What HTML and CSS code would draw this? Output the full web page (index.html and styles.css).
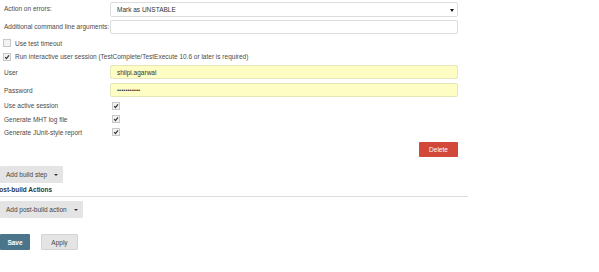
FILE: index.html
```html
<!DOCTYPE html>
<html lang="en">
<head>
  <meta charset="UTF-8">
  <title>Build configuration</title>
  <link rel="stylesheet" href="styles.css">
</head>
<body>
  <div class="form">
    <div class="row r1">
      <label class="lbl">Action on errors:</label>
      <div class="select">Mark as UNSTABLE<span class="arrow"></span></div>
    </div>
    <div class="row r2">
      <label class="lbl">Additional command line arguments:</label>
      <div class="field"></div>
    </div>
    <div class="row r3">
      <span class="box"></span>
      <span class="cblabel">Use test timeout</span>
    </div>
    <div class="row r4">
      <span class="box checked"><svg viewBox="0 0 8 8"><path d="M1.5 4.2 L3.3 6 L6.6 1.8" /></svg></span>
      <span class="cblabel">Run interactive user session (TestComplete/TestExecute 10.6 or later is required)</span>
    </div>
    <div class="row r5">
      <label class="lbl">User</label>
      <div class="field yellow">shilpi.agarwal</div>
    </div>
    <div class="row r6">
      <label class="lbl">Password</label>
      <div class="field yellow dots">•••••••••••</div>
    </div>
    <div class="row r7">
      <label class="lbl">Use active session</label>
      <span class="box checked inset"><svg viewBox="0 0 8 8"><path d="M1.5 4.2 L3.3 6 L6.6 1.8" /></svg></span>
    </div>
    <div class="row r8">
      <label class="lbl">Generate MHT log file</label>
      <span class="box checked inset"><svg viewBox="0 0 8 8"><path d="M1.5 4.2 L3.3 6 L6.6 1.8" /></svg></span>
    </div>
    <div class="row r9">
      <label class="lbl">Generate JUnit-style report</label>
      <span class="box checked inset"><svg viewBox="0 0 8 8"><path d="M1.5 4.2 L3.3 6 L6.6 1.8" /></svg></span>
    </div>
    <div class="delete-row">
      <button class="btn-delete">Delete</button>
    </div>
  </div>

  <button class="btn-gray step">Add build step <span class="caret"></span></button>

  <h3 class="section">Post-build Actions</h3>
  <button class="btn-gray post">Add post-build action <span class="caret"></span></button>

  <div class="bottom">
    <button class="btn-save">Save</button>
    <button class="btn-apply">Apply</button>
  </div>
</body>
</html>
```

FILE: styles.css
```css
body {
  margin: 0;
  padding: 0;
  font-family: 'Liberation Sans', Arial, sans-serif;
  font-size: 6.5px;
  color: #4a4a4a;
  background: #fff;
  overflow: hidden;
}

.form {
  width: 458px;
}

.row {
  display: flex;
  align-items: center;
}

.r1 { height: 17px; }
.r2 { height: 19px; }
.r3 { height: 14px; }
.r4 { height: 13px; }
.r5 { height: 18px; }
.r6 { height: 18px; }
.r7 { height: 13px; }
.r8 { height: 14px; }
.r9 { height: 12px; }

.lbl {
  width: 110px;
  padding-left: 4px;
  box-sizing: border-box;
  flex: none;
  white-space: nowrap;
}

.select, .field {
  flex: 1;
  height: 15px;
  box-sizing: border-box;
  border: 1px solid #ddd;
  border-radius: 2px;
  background: #fff;
  display: flex;
  align-items: center;
  padding-left: 6px;
  position: relative;
  color: #333;
}

.r1 .select { margin-top: 1px; height: 15px; }
.r2 .field { margin-top: 1px; height: 14px; }
.r5 .field, .r6 .field { height: 14px; }

.yellow {
  background: #fdfdc4;
  border-color: #e6e6b8;
}

.dots {
  font-size: 6px;
  letter-spacing: 0;
  color: #333;
}

.arrow {
  position: absolute;
  right: 3px;
  top: 6px;
  border-left: 2px solid transparent;
  border-right: 2px solid transparent;
  border-top: 3px solid #111;
}

.box {
  width: 6px;
  height: 6px;
  border: 1px solid #c8c8c8;
  background: #f2f2f2;
  margin-left: 3px;
  margin-right: 4px;
  flex: none;
  display: flex;
}

.box svg {
  width: 6px;
  height: 6px;
}

.box path {
  fill: none;
  stroke: #333;
  stroke-width: 1.6;
}

.box.inset {
  margin-left: 2px;
}

.cblabel {
  white-space: nowrap;
}

.delete-row {
  display: flex;
  justify-content: flex-end;
  margin-top: 4px;
}

button {
  font-family: 'Liberation Sans', Arial, sans-serif;
  font-size: 6.5px;
  border: none;
  border-radius: 1px;
  cursor: pointer;
  padding: 0;
}

.btn-delete {
  width: 39px;
  height: 15px;
  background: #d24939;
  color: #fff;
}

.btn-gray {
  display: flex;
  align-items: center;
  background: #e4e4e4;
  color: #444;
  height: 17px;
  padding-left: 6px;
}

.step {
  margin-top: 9px;
  width: 63px;
}

.post {
  margin-top: 4px;
  width: 83px;
}

.caret {
  margin-left: auto;
  margin-right: 5px;
  border-left: 2px solid transparent;
  border-right: 2px solid transparent;
  border-top: 2px solid #333;
}

.section {
  margin: 0 0 0 -5px;
  width: 473px;
  height: 13px;
  font-size: 6.5px;
  font-weight: bold;
  color: #333;
  display: flex;
  align-items: center;
  border-bottom: 1px solid #ddd;
}

.bottom {
  display: flex;
  gap: 11px;
  margin-top: 16px;
}

.btn-save {
  width: 30px;
  height: 16px;
  background: #4b758b;
  color: #fff;
  font-weight: bold;
}

.btn-apply {
  width: 37px;
  height: 16px;
  background: #e4e4e4;
  border: 1px solid #d4d4d4;
  color: #444;
}
```
